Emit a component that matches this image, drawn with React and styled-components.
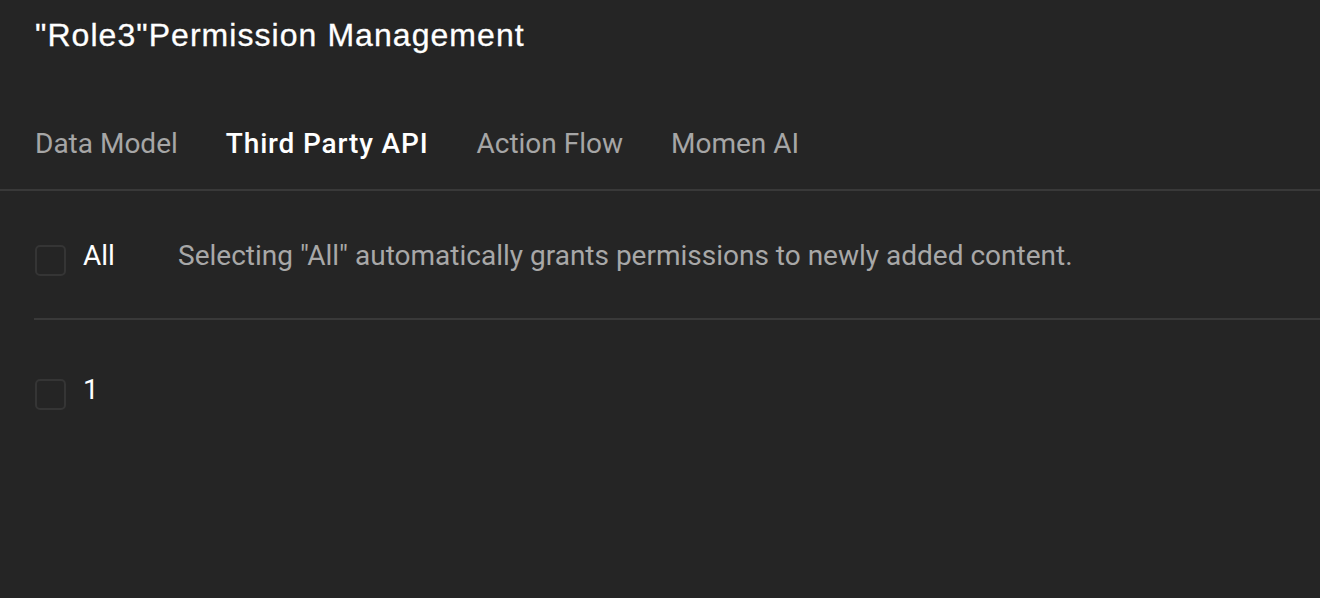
import React, { useState } from "react";
import styled, { createGlobalStyle } from "styled-components";

const GlobalStyle = createGlobalStyle`
  html, body {
    margin: 0;
    padding: 0;
    background: #252525;
  }
  body {
    font-family: Roboto, "Noto Sans", sans-serif;
  }
`;

const Page = styled.div`
  width: 1320px;
  height: 598px;
  background: #252525;
  overflow: hidden;
`;

const Title = styled.h1`
  margin: 0;
  padding: 15px 35px 0;
  height: 46px;
  font-family: "Liberation Sans", Arial, sans-serif;
  font-size: 32px;
  font-weight: 400;
  letter-spacing: 1.05px;
  line-height: 40px;
  color: #ffffff;
  -webkit-text-stroke: 0.3px #ffffff;
`;

const TabBar = styled.div`
  display: flex;
  gap: 48px;
  margin-top: 63px;
  padding: 0 35px;
  height: 65px;
  border-bottom: 2px solid #393939;
  box-sizing: content-box;
`;

const Tab = styled.button`
  background: none;
  border: none;
  padding: 0;
  height: 40px;
  font-family: Roboto, sans-serif;
  font-size: 28px;
  line-height: 40px;
  font-weight: ${(p) => (p.active ? 500 : 400)};
  letter-spacing: ${(p) => (p.active ? "0.85px" : "0")};
  color: ${(p) => (p.active ? "#ffffff" : "#a6a6a6")};
  cursor: pointer;
`;

const List = styled.div`
  padding-left: 34px;
`;

const Row = styled.div`
  display: flex;
  align-items: flex-start;
  height: ${(p) => p.height}px;
  padding-top: ${(p) => p.top}px;
  box-sizing: border-box;
  border-bottom: ${(p) => (p.divider ? "2px solid #393939" : "none")};
`;

const Box = styled.span`
  width: 31px;
  height: 31px;
  margin-top: 9px;
  margin-left: 1px;
  border: 2px solid #353535;
  border-radius: 5px;
  box-sizing: border-box;
  flex-shrink: 0;
  cursor: pointer;
  background: ${(p) => (p.checked ? "#3a3a3a" : "transparent")};
`;

const Label = styled.span`
  margin-left: 17px;
  width: ${(p) => (p.w ? `${p.w}px` : "auto")};
  font-size: 28px;
  line-height: 40px;
  color: #ffffff;
`;

const Hint = styled.span`
  font-size: 28px;
  line-height: 40px;
  color: #a8a8a8;
`;

const tabs = ["Data Model", "Third Party API", "Action Flow", "Momen AI"];

export default function App() {
  const [active, setActive] = useState(1);
  const [all, setAll] = useState(false);
  const [one, setOne] = useState(false);

  return (
    <Page>
      <GlobalStyle />
      <Title>"Role3"Permission Management</Title>
      <TabBar>
        {tabs.map((t, i) => (
          <Tab key={t} active={i === active} onClick={() => setActive(i)}>
            {t}
          </Tab>
        ))}
      </TabBar>
      <List>
        <Row height={129} top={45} divider>
          <Box checked={all} onClick={() => setAll((v) => !v)} />
          <Label w={95}>All</Label>
          <Hint>Selecting "All" automatically grants permissions to newly added content.</Hint>
        </Row>
        <Row height={120} top={50}>
          <Box checked={one} onClick={() => setOne((v) => !v)} />
          <Label>1</Label>
        </Row>
      </List>
    </Page>
  );
}
